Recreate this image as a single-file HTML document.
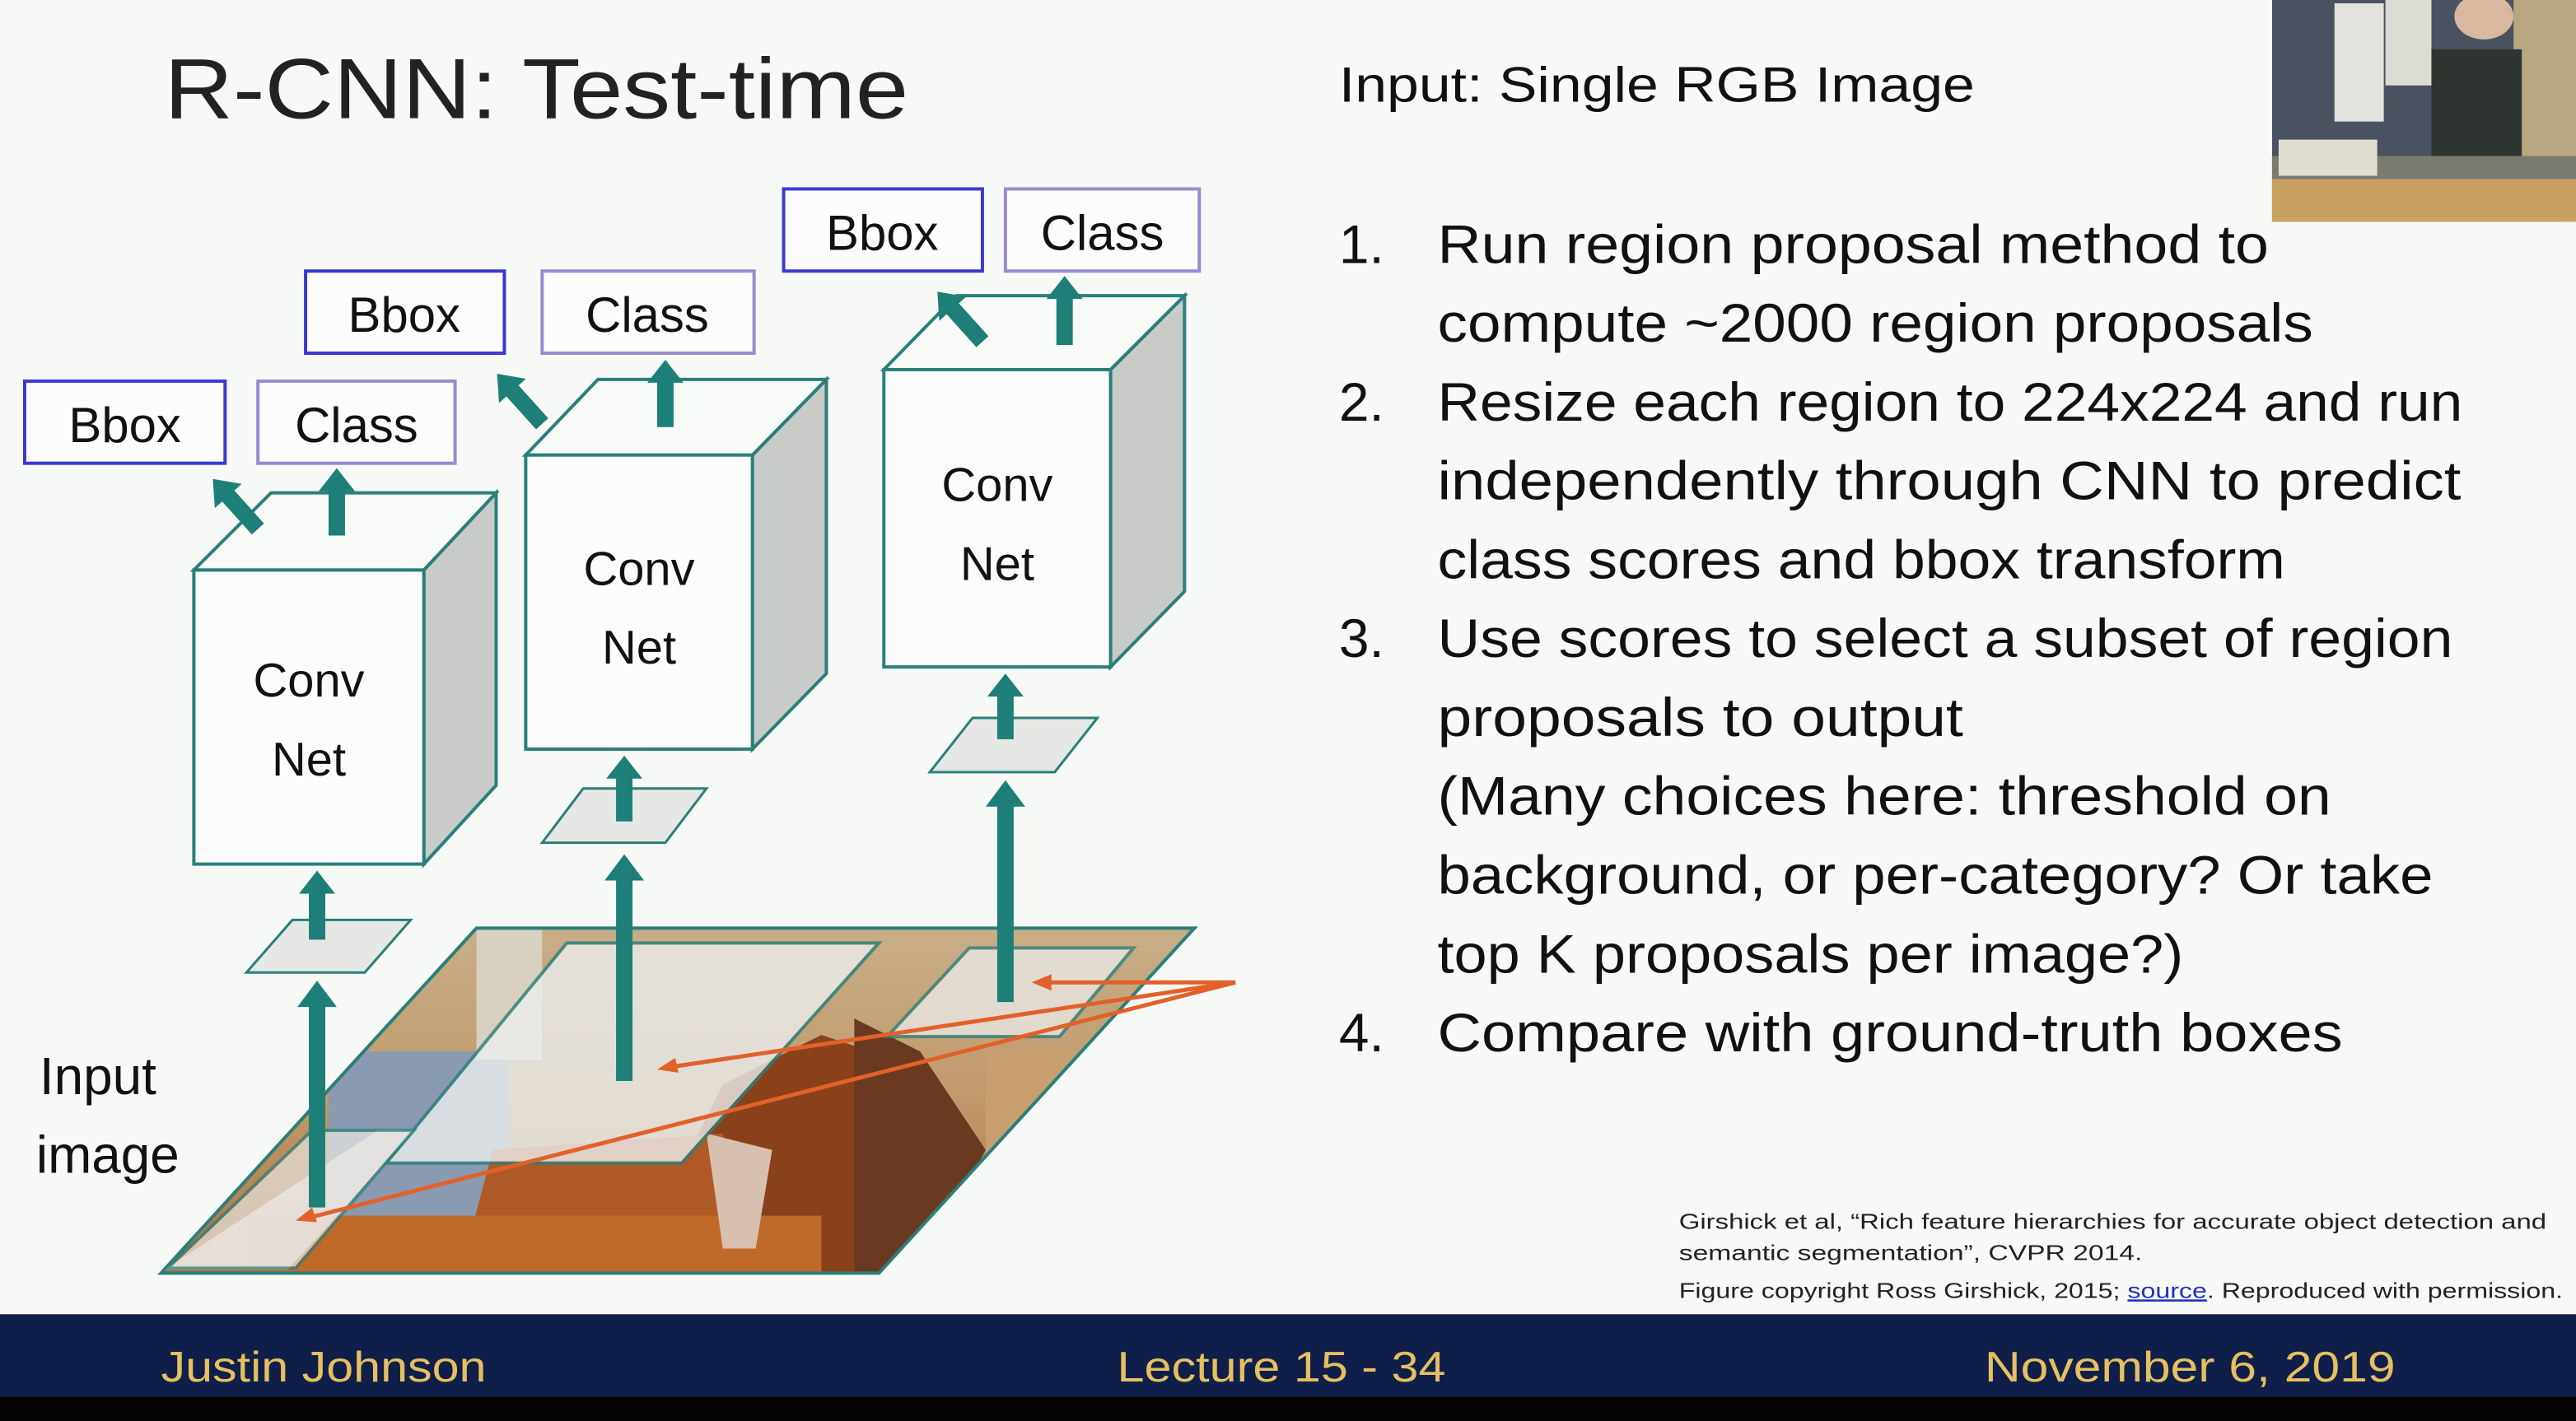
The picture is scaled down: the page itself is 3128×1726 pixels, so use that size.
<!DOCTYPE html>
<html><head><meta charset="utf-8"><style>
html,body{margin:0;padding:0;background:#f7f9f6;}
svg{display:block}
text{font-family:"Liberation Sans",sans-serif;}
</style></head><body>
<svg width="3128" height="1726" viewBox="0 0 1568 865" preserveAspectRatio="none" xmlns="http://www.w3.org/2000/svg">
<defs>
<linearGradient id="photo" x1="0" y1="0" x2="0" y2="1">
<stop offset="0" stop-color="#c8ae88"/><stop offset="0.5" stop-color="#c09a6a"/><stop offset="1" stop-color="#b07040"/>
</linearGradient>
<clipPath id="pc"><polygon points="98,775 290,565 727,565 535,775"/></clipPath>
</defs>
<rect width="1568" height="865" fill="#f7f9f6"/>
<!-- webcam -->
<rect x="1383" y="0" width="185" height="135" fill="#4a5260"/>
<rect x="1560" y="0" width="8" height="135" fill="#d8c8a0"/>
<rect x="1530" y="0" width="38" height="95" fill="#b8a880"/>
<rect x="1421" y="2" width="30" height="72" fill="#e2e2dc"/>
<rect x="1452" y="0" width="28" height="52" fill="#dcdcd4"/>
<rect x="1480" y="30" width="55" height="100" fill="#2e3530"/>
<ellipse cx="1512" cy="10" rx="18" ry="14" fill="#d8b8a0"/>
<rect x="1383" y="108" width="185" height="27" fill="#c8a060"/>
<rect x="1383" y="95" width="185" height="14" fill="#7a7a70"/>
<rect x="1387" y="85" width="60" height="22" fill="#e0ddd0"/>
<!-- title -->
<text x="100" y="72" font-size="52" fill="#222" textLength="453" lengthAdjust="spacingAndGlyphs">R-CNN: Test-time</text>
<text x="815" y="62" font-size="30" fill="#111" textLength="387" lengthAdjust="spacingAndGlyphs">Input: Single RGB Image</text>
<g font-size="33" fill="#111">
<text x="815" y="160">1.</text>
<text x="875" y="160" textLength="506" lengthAdjust="spacingAndGlyphs">Run region proposal method to</text>
<text x="875" y="208" textLength="533" lengthAdjust="spacingAndGlyphs">compute ~2000 region proposals</text>
<text x="815" y="256">2.</text>
<text x="875" y="256" textLength="624" lengthAdjust="spacingAndGlyphs">Resize each region to 224x224 and run</text>
<text x="875" y="304" textLength="623" lengthAdjust="spacingAndGlyphs">independently through CNN to predict</text>
<text x="875" y="352" textLength="516" lengthAdjust="spacingAndGlyphs">class scores and bbox transform</text>
<text x="815" y="400">3.</text>
<text x="875" y="400" textLength="618" lengthAdjust="spacingAndGlyphs">Use scores to select a subset of region</text>
<text x="875" y="448" textLength="320" lengthAdjust="spacingAndGlyphs">proposals to output</text>
<text x="875" y="496" textLength="544" lengthAdjust="spacingAndGlyphs">(Many choices here: threshold on</text>
<text x="875" y="544" textLength="606" lengthAdjust="spacingAndGlyphs">background, or per-category? Or take</text>
<text x="875" y="592" textLength="454" lengthAdjust="spacingAndGlyphs">top K proposals per image?)</text>
<text x="815" y="640">4.</text>
<text x="875" y="640" textLength="551" lengthAdjust="spacingAndGlyphs">Compare with ground-truth boxes</text>
</g>
<!-- citation -->
<g font-size="13" fill="#222">
<text x="1022" y="748" textLength="528" lengthAdjust="spacingAndGlyphs">Girshick et al, “Rich feature hierarchies for accurate object detection and</text>
<text x="1022" y="767" textLength="282" lengthAdjust="spacingAndGlyphs">semantic segmentation”, CVPR 2014.</text>
<text x="1022" y="790" textLength="538" lengthAdjust="spacingAndGlyphs">Figure copyright Ross Girshick, 2015; <tspan fill="#2233bb" text-decoration="underline">source</tspan>. Reproduced with permission.</text>
</g>
<!-- image parallelogram -->
<polygon points="98,775 290,565 727,565 535,775" fill="url(#photo)"/>
<g clip-path="url(#pc)">
<rect x="200" y="640" width="110" height="100" fill="#8a9ab0"/>
<rect x="290" y="565" width="40" height="80" fill="#d8d0c0"/>
<polygon points="440,660 500,630 560,650 580,720 560,775 400,775 420,700" fill="#8a4018"/>
<polygon points="300,700 440,690 460,775 280,775" fill="#b05a28"/>
<rect x="150" y="740" width="350" height="40" fill="#c06a2a"/>
<polygon points="520,620 560,640 600,700 560,775 520,775" fill="#6a3a20"/>
<rect x="600" y="640" width="130" height="140" fill="#c8a070"/>
<polygon points="430,690 470,700 460,760 440,760" fill="#d8c0b0"/>
</g>
<polygon points="98,775 290,565 727,565 535,775" fill="none" stroke="#2a7f7a" stroke-width="2"/>
<polygon points="235,708 345,574 535,574 415,708" fill="#eceeee" opacity="0.8" stroke="#2a7f7a" stroke-width="2"/>
<polygon points="540,631 590,577 690,577 645,631" fill="#ececea" opacity="0.75" stroke="#2a7f7a" stroke-width="2"/>
<polygon points="100,773 230,688 252,688 175,773" fill="#ececea" opacity="0.75"/>
<polygon points="102,772 190,688 252,688 180,772" fill="#e8e6e2" opacity="0.7" stroke="#2a7f7a" stroke-width="2"/>
<!-- orange lines -->
<g stroke="#e2602a" stroke-width="2.5" fill="none">
<polyline points="752,598 633,598"/>
<polyline points="752,598 405,650"/>
<polyline points="752,598 185,742"/>
</g>
<g fill="#e2602a">
<polygon points="628,598 640,593 640,603"/>
<polygon points="400,651 411,644 413,653"/>
<polygon points="180,743 190,735 193,744"/>
</g>
<!-- small planes -->
<g fill="#e6e8e6" stroke="#2a7f7a" stroke-width="1.5">
<polygon points="150,592 178,560 250,560 222,592"/>
<polygon points="330,513 355,480 430,480 405,513"/>
<polygon points="566,470 592,437 668,437 642,470"/>
</g>
<!-- cubes -->
<g stroke="#2a7f7a" stroke-width="2">
<polygon points="258,347 302,300 302,478 258,526" fill="#c9cbc9"/>
<polygon points="118,347 165,300 302,300 258,347" fill="#f8faf8"/>
<rect x="118" y="347" width="140" height="179" fill="#fbfcfb"/>
<polygon points="458,277 503,231 503,410 458,456" fill="#c9cbc9"/>
<polygon points="320,277 364,231 503,231 458,277" fill="#f8faf8"/>
<rect x="320" y="277" width="138" height="179" fill="#fbfcfb"/>
<polygon points="676,225 721,180 721,360 676,406" fill="#c9cbc9"/>
<polygon points="538,225 582,180 721,180 676,225" fill="#f8faf8"/>
<rect x="538" y="225" width="138" height="181" fill="#fbfcfb"/>
</g>
<g font-size="29" fill="#111" text-anchor="middle">
<text x="188" y="424">Conv</text><text x="188" y="472">Net</text>
<text x="389" y="356">Conv</text><text x="389" y="404">Net</text>
<text x="607" y="305">Conv</text><text x="607" y="353">Net</text>
</g>
<!-- labels -->
<g fill="#fbfcfb" stroke-width="2">
<rect x="15" y="232" width="122" height="50" stroke="#3a3ad0"/>
<rect x="157" y="232" width="120" height="50" stroke="#9a8ad0"/>
<rect x="186" y="165" width="121" height="50" stroke="#3a3ad0"/>
<rect x="330" y="165" width="129" height="50" stroke="#9a8ad0"/>
<rect x="477" y="115" width="121" height="50" stroke="#3a3ad0"/>
<rect x="612" y="115" width="118" height="50" stroke="#9a8ad0"/>
</g>
<g font-size="30" fill="#111" text-anchor="middle">
<text x="76" y="269">Bbox</text><text x="217" y="269">Class</text>
<text x="246" y="202">Bbox</text><text x="394" y="202">Class</text>
<text x="537" y="152">Bbox</text><text x="671" y="152">Class</text>
</g>
<!-- arrows -->
<g fill="#1d7f77">
<polygon points="200,326 200,299 194,299 205,285 216,299 210,299 210,326"/>
<polygon points="400,260 400,233 394,233 405,219 416,233 410,233 410,260"/>
<polygon points="643,210 643,182 637,182 648,168 659,182 653,182 653,210"/>
<g transform="rotate(-42 157 322)"><polygon points="152,322 152,295 146,295 157,281 168,295 162,295 162,322"/></g>
<g transform="rotate(-42 330 258)"><polygon points="325,258 325,231 319,231 330,217 341,231 335,231 335,258"/></g>
<g transform="rotate(-42 598 208)"><polygon points="593,208 593,181 587,181 598,167 609,181 603,181 603,208"/></g>
<polygon points="188,572 188,544 182,544 193,530 204,544 198,544 198,572"/>
<polygon points="375,500 375,474 369,474 380,460 391,474 385,474 385,500"/>
<polygon points="607,450 607,424 601,424 612,410 623,424 617,424 617,450"/>
<polygon points="188,735 188,613 181,613 193,597 205,613 198,613 198,735"/>
<polygon points="375,658 375,536 368,536 380,520 392,536 385,536 385,658"/>
<polygon points="607,610 607,491 600,491 612,475 624,491 617,491 617,610"/>
</g>
<text x="24" y="666" font-size="32" fill="#111">Input</text>
<text x="22" y="714" font-size="32" fill="#111">image</text>
<!-- footer -->
<rect x="0" y="800" width="1568" height="50" fill="#0f1f4a"/>
<rect x="0" y="850" width="1568" height="15" fill="#050505"/>
<g font-size="26" fill="#e6c060">
<text x="98" y="841" textLength="198" lengthAdjust="spacingAndGlyphs">Justin Johnson</text>
<text x="680" y="841" textLength="200" lengthAdjust="spacingAndGlyphs">Lecture 15 - 34</text>
<text x="1208" y="841" textLength="250" lengthAdjust="spacingAndGlyphs">November 6, 2019</text>
</g>
</svg>
</body></html>
